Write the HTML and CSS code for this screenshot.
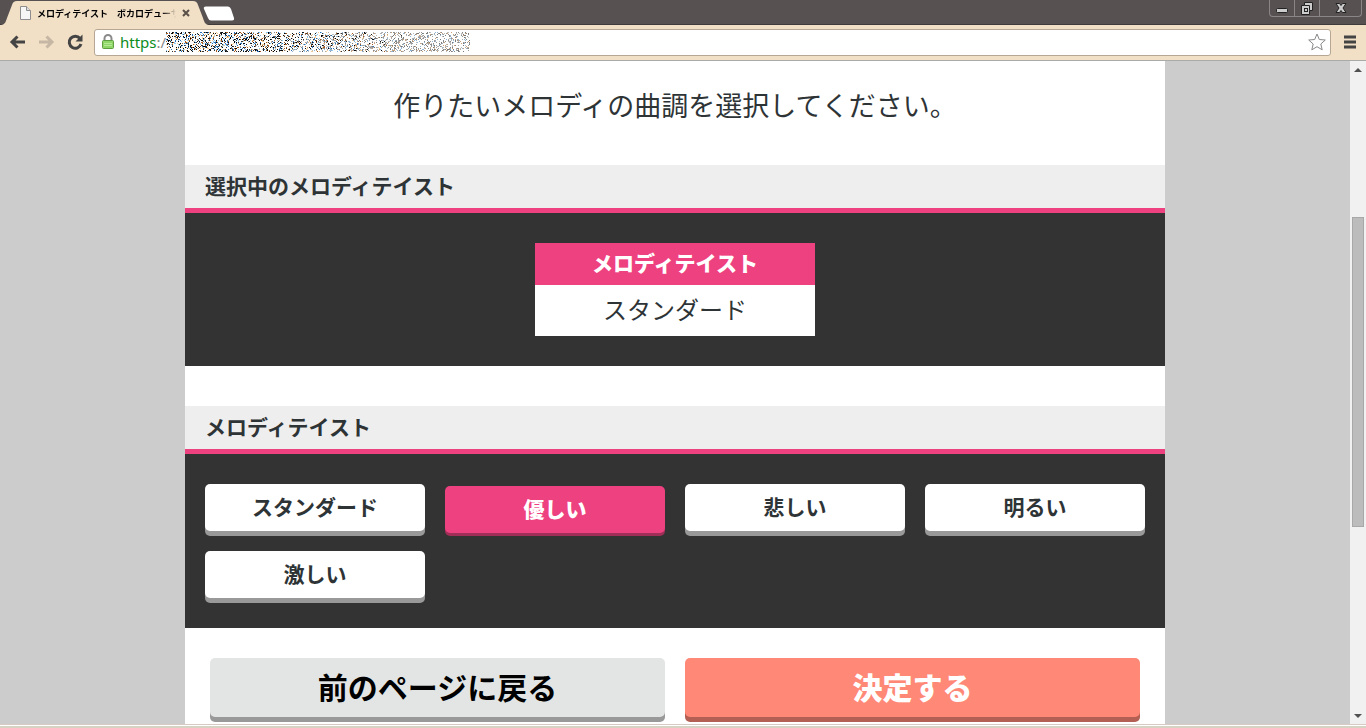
FILE: index.html
```
<!DOCTYPE html>
<html lang="ja">

<head>
    <meta charset="UTF-8">
    <meta name="viewport" content="width=device-width, initial-scale=1.0">
    <title>メロディテイスト</title>
    <link rel="stylesheet" href="styles.css">
</head>

<body>
    <header class="tabbar">
        <div class="tab">
            <svg class="tab-edge" viewBox="0 0 16 25"><path d="M0,25 C4,25 5,21 6,18 L11,5 Q12,1 16,1 L16,25 Z"></path></svg>
            <div class="tab-body">
                <svg class="tab-file" viewBox="0 0 12 14">
                    <path d="M1.500,.5 H7.500 L11.500,4.500 V13.500 H1.500 Z" fill="#f6f6f6" stroke="#8e8e8e"></path>
                    <path d="M7.500,.5 V4.500 H11.500" fill="#ddd" stroke="#8e8e8e"></path>
                </svg>
                <span class="tab-title">メロディテイスト　ボカロデューサー</span>
                <button class="tab-close" aria-label="タブを閉じる">
                    <svg viewBox="0 0 8 8"><path d="M1,1 7,7 M7,1 1,7"></path></svg>
                </button>
            </div>
            <svg class="tab-edge" viewBox="0 0 16 25"><path d="M16,25 C12,25 11,21 10,18 L5,5 Q4,1 0,1 L0,25 Z"></path></svg>
        </div>
        <button class="tab-new" aria-label="新しいタブ">
            <svg viewBox="0 0 32 15"><path d="M3,.5 H25 Q27,.5 28,3 L31,12 Q31.500,14.500 29,14.500 H8 Q6,14.500 5,12 L1,3 Q0,.5 3,.5 Z"></path></svg>
        </button>
        <div class="window-buttons">
            <button aria-label="最小化">
                <svg viewBox="0 0 24 16"><rect x="6.500" y="8.500" width="11" height="4" rx="1"></rect></svg>
            </button>
            <button aria-label="元に戻す">
                <svg viewBox="0 0 24 16"><path d="M9.500,2.500 H17.500 V10.500 H14.500 V14.500 H6.500 V5.500 H9.500 Z"></path><path d="M9.500,5.500 H14.500 V10.500"></path><rect x="9.500" y="8.500" width="3" height="3"></rect></svg>
            </button>
            <button class="window-close" aria-label="閉じる">
                <svg viewBox="0 0 24 16"><path d="M7,3.500 H10.500 L12,5.500 L13.500,3.500 H17 L14,8 L17,12.500 H13.500 L12,10.500 L10.500,12.500 H7 L10,8 Z"></path></svg>
            </button>
        </div>
    </header>

    <nav class="toolbar">
        <button aria-label="戻る">
            <svg viewBox="0 0 18 18"><path d="M17,9 H4 M9.500,3.500 4,9 9.500,14.500"></path></svg>
        </button>
        <button aria-label="進む" disabled>
            <svg viewBox="0 0 18 18"><path d="M2,9 H15 M9.500,3.500 15,9 9.500,14.500"></path></svg>
        </button>
        <button aria-label="再読み込み">
            <svg viewBox="0 0 18 18"><path d="M14,5.500 A6,6 0 1 0 15,11"></path><path class="solid" d="M16.500,1.500 V8.500 H9.500 Z"></path></svg>
        </button>
        <div class="address">
            <svg class="lock" viewBox="0 0 12 16">
                <path d="M2.500,7 V4.500 A3.500,3.500 0 0 1 9.500,4.500 V7" fill="none" stroke="#8a8a8a" stroke-width="2"></path>
                <rect x=".5" y="6.500" width="11" height="8" rx="1" fill="#8fd668" stroke="#5e9e3f"></rect>
                <path d="M2,9.500 H10 M2,11.500 H10" stroke="#b4ea94"></path>
            </svg>
            <label for="url"><span class="secure">https</span>:/</label>
            <canvas class="noise" width="304" height="20"></canvas>
            <input id="url" type="text">
            <button class="star" aria-label="ブックマーク">
                <svg viewBox="0 0 18 18"><path d="M9,1 11.300,6.500 17.300,7 12.800,11 14.200,16.800 9,13.700 3.800,16.800 5.200,11 .7,7 6.700,6.500 Z"></path></svg>
            </button>
        </div>
        <button class="menu" aria-label="メニュー">
            <svg viewBox="0 0 14 14"><path d="M1,2 H13 M1,7 H13 M1,12 H13"></path></svg>
        </button>
    </nav>

    <div class="viewport">
        <main class="content">
            <div class="page">
                <p class="lead">作りたいメロディの曲調を選択してください。</p>

                <section class="selected">
                    <h2>選択中のメロディテイスト</h2>
                    <div class="panel">
                        <dl class="card">
                            <dt>メロディテイスト</dt>
                            <dd>スタンダード</dd>
                        </dl>
                    </div>
                </section>

                <section>
                    <h2>メロディテイスト</h2>
                    <div class="panel choices">
                        <button class="choice">スタンダード</button>
                        <button class="choice active">優しい</button>
                        <button class="choice">悲しい</button>
                        <button class="choice">明るい</button>
                        <button class="choice">激しい</button>
                    </div>
                </section>

                <div class="actions">
                    <button class="back">前のページに戻る</button>
                    <button class="submit">決定する</button>
                </div>
            </div>
        </main>
        <div class="scrollbar">
            <svg viewBox="0 0 16 16"><path d="M4,11 8,7 12,11 Z"></path></svg>
            <div class="before"></div>
            <div class="thumb"></div>
            <div class="after"></div>
            <svg viewBox="0 0 16 16"><path d="M4,6 8,10 12,6 Z"></path></svg>
        </div>
    </div>
    <footer class="window-edge"></footer>

    <script>
        // scrambled part of the address, fading out to the right
        const canvas = document.querySelector('.noise');
        const ctx = canvas.getContext('2d');
        const dark = ['#000', '#111', '#333', '#a85a1c', '#2a6fb5', '#8cc8f0', '#f0c890'];
        const light = ['#777', '#888', '#999', '#aaa', '#c9a27c', '#8fb4d4', '#bbb'];
        let seed = 7;

        function random() {
            seed = (seed * 16807) % 2147483647;
            return seed / 2147483647;
        }

        for (let x = 0; x < canvas.width; x++) {
            for (let y = 0; y < canvas.height; y++) {
                if (random() > 0.42 - x / 3000) continue;
                const colors = random() < x / 170 - 0.4 ? light : dark;
                ctx.fillStyle = colors[Math.floor(random() * colors.length)];
                ctx.fillRect(x, y, 1, 1);
            }
        }
    </script>
</body>

</html>
```
FILE: styles.css
```
*,
*:before,
*:after {
    box-sizing: border-box;
}

body {
    margin: 0;
    height: 100vh;
    display: flex;
    flex-direction: column;
    overflow: hidden;
    color: #2e3436;
    font-family: "Noto Sans CJK JP", sans-serif;
}

button {
    padding: 0;
    border: 0;
    background: none;
    color: inherit;
    font-family: inherit;
    cursor: pointer;
}

svg {
    display: block;
}

/* tabs */
.tabbar {
    display: flex;
    flex: none;
    height: 25px;
    background: #575152;
    border-bottom: 1px solid #3f3a3b;
}

.tab {
    display: flex;
    height: 25px;
    margin-left: 1px;
}

.tab-edge {
    width: 16px;
    height: 25px;
    fill: #f1dfc6;
}

.tab-body {
    display: flex;
    align-items: center;
    gap: 6px;
    width: 176px;
    margin-top: 1px;
    background: #f1dfc6;
}

.tab-file {
    width: 12px;
    height: 14px;
    margin-left: 2px;
}

.tab-title {
    flex: 1;
    overflow: hidden;
    white-space: nowrap;
    color: #000;
    font-size: 9px;
    font-weight: bold;
    mask-image: linear-gradient(to right, #000 90%, transparent);
}

.tab-close {
    width: 8px;
    margin-right: 3px;
}

.tab-close path {
    stroke: #5a5048;
    stroke-width: 2;
}

.tab-new {
    width: 32px;
    height: 15px;
    margin: 6px 0 0 -6px;
    fill: #fff;
}

.window-buttons {
    display: flex;
    height: 17px;
    margin: 0 4px 0 auto;
    border: 1px solid #8a8586;
    border-top: 0;
    border-radius: 0 0 4px 4px;
}

.window-buttons button {
    width: 25px;
    border-right: 1px solid #8a8586;
}

.window-buttons .window-close {
    width: 41px;
    border-right: 0;
}

.window-buttons svg {
    width: 24px;
    height: 16px;
    margin: 0 auto;
    fill: #ccc;
    stroke: #222;
}

/* address row */
.toolbar {
    display: flex;
    flex: none;
    align-items: center;
    height: 36px;
    padding: 0 9px 1px 8px;
    background: #f1dfc6;
    border-bottom: 1px solid #aaa;
}

.toolbar > button {
    width: 18px;
    margin-right: 11px;
}

.toolbar > button svg {
    fill: none;
    stroke: #444;
    stroke-width: 3;
}

.toolbar > button[disabled] {
    opacity: 0.25;
}

.toolbar > button .solid {
    fill: #444;
    stroke: none;
}

.toolbar > .menu {
    width: 14px;
    margin: 0 0 0 12px;
}

.address {
    display: flex;
    flex: 1;
    align-items: center;
    height: 27px;
    margin-left: -1px;
    padding: 0 4px 0 7px;
    border: 1px solid #b5a793;
    border-radius: 3px;
    background: #fff;
    color: #888;
    font-family: "Noto Sans", sans-serif;
    font-size: 15px;
}

.lock {
    width: 12px;
    height: 16px;
    margin-right: 6px;
}

.secure {
    color: #0b8c1c;
}

.address input {
    flex: 1;
    min-width: 0;
    border: 0;
    outline: 0;
    background: none;
    font: inherit;
}

.star {
    width: 18px;
}

.star path {
    fill: #fff;
    stroke: #888;
}

/* page */
.viewport {
    display: flex;
    flex: 1;
    min-height: 0;
}

.content {
    flex: 1;
    overflow: hidden;
    background: #ccc;
}

.page {
    max-width: 980px;
    min-height: 100%;
    margin: 0 auto;
    background: #fff;
}

.lead {
    margin: 0;
    padding: 24px 20px 40px;
    font-size: 27px;
    line-height: 40px;
    text-align: center;
}

.selected {
    margin-bottom: 40px;
}

h2 {
    margin: 0;
    padding: 0 20px 2px;
    border-bottom: 5px solid #ee417f;
    background: #eee;
    font-size: 21px;
    line-height: 41px;
}

.panel {
    padding: 30px 20px;
    background: #333;
}

.card {
    width: 280px;
    margin: 0 auto;
    text-align: center;
}

.card dt {
    padding-bottom: 4px;
    background: #ee417f;
    color: #fff;
    font-size: 21px;
    font-weight: 900;
    line-height: 38px;
}

.card dd {
    margin: 0;
    padding-bottom: 4px;
    background: #fff;
    font-size: 24px;
    line-height: 47px;
}

.choices {
    display: grid;
    grid-template-columns: repeat(4, 1fr);
    gap: 20px;
}

.choice {
    height: 47px;
    padding-bottom: 4px;
    border-radius: 5px;
    background: #fff;
    box-shadow: 0 5px #999;
    font-size: 21px;
    font-weight: bold;
}

.choice.active {
    margin-top: 2px;
    background: #ee417f;
    box-shadow: 0 3px #a02e57;
    color: #fff;
    font-weight: 900;
}

.choices {
    row-gap: 18px;
}

.actions {
    display: grid;
    grid-template-columns: 1fr 1fr;
    gap: 20px;
    padding: 30px 25px;
}

.actions button {
    height: 59px;
    padding-bottom: 4px;
    border-radius: 5px;
    font-size: 30px;
    font-weight: bold;
}

.actions .back {
    background: #e3e5e4;
    box-shadow: 0 5px #999;
    color: #000;
}

.actions .submit {
    background: #ff8877;
    box-shadow: 0 5px #b35f53;
    color: #fff;
    font-weight: 900;
}

/* scrollbar */
.scrollbar {
    display: flex;
    flex-direction: column;
    width: 16px;
    background: #f1f1f1;
}

.scrollbar svg {
    width: 16px;
    height: 16px;
    fill: #505050;
}

.before {
    flex: 140;
}

.thumb {
    flex: 309;
    margin: 0 2px;
    border: 1px solid #a8a8a8;
    background: #bcbcbc;
}

.after {
    flex: 182;
}

.window-edge {
    flex: none;
    height: 4px;
    border-top: 1px solid #d5cbc4;
    border-bottom: 2px solid #d6d2c4;
    background: #fff;
}
```
